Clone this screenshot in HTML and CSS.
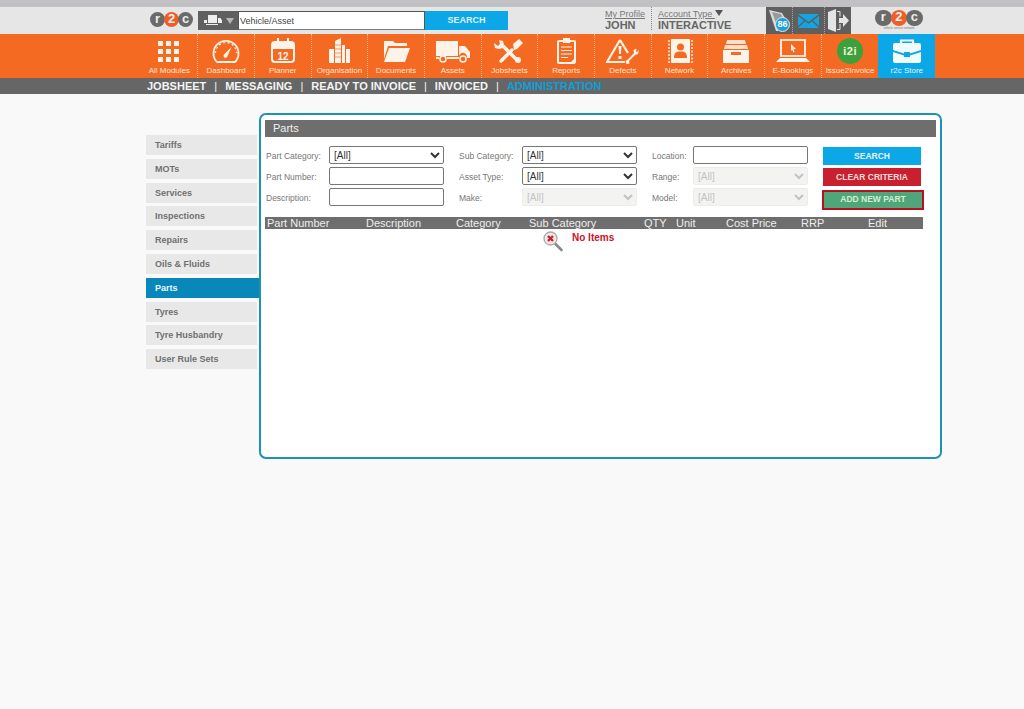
FILE: index.html
```html
<!DOCTYPE html>
<html>
<head>
	<meta charset="utf-8"/>
	<title>Parts</title>
	<link rel="stylesheet" href="styles.css">
</head>
<body>
	<div id="strip"></div>
	<div id="header">
		<div class="logo logo-left"><span>r</span><span class="two">2</span><span>c</span></div>
		<div id="asset-type">
			<svg width="19" height="11" viewBox="0 0 19 11"><path fill="#eee" d="M5 0h9v8H5zM15 3h2.500L19 5.500V8h-4zM1 5h3v3H1zM3 9h12v1H3z"/></svg>
			<i class="down"></i>
		</div>
		<input type="text" id="top-search" value="Vehicle/Asset"/>
		<a id="top-btn" href="javascript:void(0)">SEARCH</a>
		<div class="who">
			<a href="javascript:void(0)">My Profile</a>
			<b>JOHN</b>
		</div>
		<div class="who who-account">
			<a href="javascript:void(0)">Account Type <i class="down dark"></i></a>
			<b>INTERACTIVE</b>
		</div>
		<div id="tools">
			<div class="tool first">
				<svg width="22" height="24" viewBox="0 0 22 24"><path fill="#d8dcdc" d="M1 1l13 3 4 7-8 11h-2z"/><path fill="#9a9a9a" d="M4 3l9 2 3 6-7 6z"/></svg>
				<span id="badge">86</span>
			</div>
			<div class="tool mid">
				<svg width="21" height="14" viewBox="0 0 21 14"><path fill="#12a5e2" d="M0 0h21L10.500 8zM0 2l6 4.500L0 12zM21 2l-6 4.500 6 5.500zM7 7.300l3.500 2.500L14 7.300 21 14H0z"/></svg>
			</div>
			<div class="tool">
				<svg width="21" height="23" viewBox="0 0 21 23"><path fill="#e4e4e4" d="M0 3l8-3v23l-8-3z"/><path fill="none" stroke="#e4e4e4" d="M9 2.500h3v5M12 15v5.500H9"/><path fill="#e4e4e4" d="M11 9h4V5l6 6.500-6 6.500v-4h-4z"/></svg>
			</div>
		</div>
		<div class="logo logo-right">
			<div class="logo-row"><span>r</span><span class="two">2</span><span>c</span></div>
			<small>vehicle service network</small>
		</div>
	</div>
	<ul id="modules">
		<li><a href="javascript:void(0)">
			<svg width="34" height="26" viewBox="0 0 34 26"><path fill="#fdf3e8" d="M6 3h5v5H6zM14 3h5v5h-5zM22 3h5v5h-5zM6 11h5v5H6zM14 11h5v5h-5zM22 11h5v5h-5zM6 19h5v5H6zM14 19h5v5h-5zM22 19h5v5h-5z"/></svg>
			All Modules</a></li>
		<li><a href="javascript:void(0)">
			<svg width="34" height="26" viewBox="0 0 34 26"><g fill="none" stroke="#fdf3e8"><path stroke-width="1.800" d="M8 24a12.500 12.500 0 1 1 18 0z"/><path stroke-width="1.200" d="M6.500 15a10.500 10.500 0 0 1 21 0" stroke-dasharray="2 2.500"/></g><path fill="#fdf3e8" d="M15.500 16l7-7-4 9a2 2 0 1 1-3-2z"/></svg>
			Dashboard</a></li>
		<li><a href="javascript:void(0)">
			<svg width="34" height="26" viewBox="0 0 34 26"><rect x="6" y="4" width="22" height="20" rx="3" fill="none" stroke="#fdf3e8" stroke-width="2"/><path fill="#fdf3e8" d="M6 5h22v6H6z"/><path stroke="#fdf3e8" stroke-width="2" d="M12 0v6M22 0v6"/><text x="17" y="22" text-anchor="middle" class="svg-num">12</text></svg>
			Planner</a></li>
		<li><a href="javascript:void(0)">
			<svg width="34" height="26" viewBox="0 0 34 26"><path fill="#fdf3e8" d="M7 11h5v14H7zM13 3l6-3v25h-6zM20 7h3v18h-3zM24 11h4v14h-4z"/><path stroke="#f56a23" d="M13 7h6M13 11h6M13 15h6M13 19h6" stroke-width=".7"/></svg>
			Organisation</a></li>
		<li><a href="javascript:void(0)">
			<svg width="34" height="26" viewBox="0 0 34 26"><path fill="#fdf3e8" d="M5 3h9l2 2h12v3H9L5 21z"/><path fill="#fdf3e8" d="M10 10h21l-5 14H5z"/></svg>
			Documents</a></li>
		<li><a href="javascript:void(0)">
			<svg width="36" height="26" viewBox="0 0 36 26"><path fill="#fdf3e8" d="M1 3h22v15H1zM24 8h6l5 6v6h-3a4 4 0 0 0-8-2zM1 19h3v2H1zM12 19h12v2H12z"/><circle cx="8" cy="21" r="3" fill="none" stroke="#fdf3e8" stroke-width="1.500"/><circle cx="28" cy="21" r="3" fill="none" stroke="#fdf3e8" stroke-width="1.500"/></svg>
			Assets</a></li>
		<li><a href="javascript:void(0)">
			<svg width="34" height="26" viewBox="0 0 34 26"><path stroke="#fdf3e8" stroke-width="3.500" stroke-linecap="round" d="M9 23L20 12"/><path fill="#fdf3e8" d="M21 6l6-5 4 4-6 6-3 1z"/><path stroke="#fdf3e8" stroke-width="3.500" d="M11 8l14 14"/><path fill="#fdf3e8" d="M7 2l4 1 1 4-1 3-4 1-4-1-1-5 4 3 2-2z"/><circle cx="26" cy="22" r="3" fill="#fdf3e8"/></svg>
			Jobsheets</a></li>
		<li><a href="javascript:void(0)">
			<svg width="34" height="26" viewBox="0 0 34 26"><rect x="9" y="3" width="17" height="22" rx="1" fill="none" stroke="#fdf3e8" stroke-width="2"/><path fill="#fdf3e8" d="M14 0h7v5h-7zM21 25l5-5v5z"/><path stroke="#fdf3e8" stroke-width="1.200" d="M12 9h11M12 12.500h11M12 16h11M12 19.500h7"/></svg>
			Reports</a></li>
		<li><a href="javascript:void(0)">
			<svg width="36" height="26" viewBox="0 0 36 26"><path fill="none" stroke="#fdf3e8" stroke-width="2.200" stroke-linejoin="round" d="M15 2L2 24h18M15 2l8 13"/><path fill="#fdf3e8" d="M13.500 8h3l-.6 8h-1.800zM13.500 18h3v3h-3zM34 12l-1 4-3 1-6 6 .5 2.500-3 .5-1-3 2.500-1.500 6-6.500-.5-3 3-1.500-.5 3 1 .5z"/></svg>
			Defects</a></li>
		<li><a href="javascript:void(0)">
			<svg width="34" height="26" viewBox="0 0 34 26"><rect x="8" y="1" width="19" height="24" rx="1" fill="#fdf3e8"/><circle cx="17.500" cy="9" r="3.500" fill="#f56a23"/><path fill="#f56a23" d="M11 20c0-6 3-6.500 6.500-6.500S24 14 24 20z"/><path stroke="#fdf3e8" stroke-width="1.500" stroke-dasharray="2 1.500" d="M6 2v23M29 2v23"/></svg>
			Network</a></li>
		<li><a href="javascript:void(0)">
			<svg width="34" height="26" viewBox="0 0 34 26"><path fill="#fdf3e8" d="M8 2h18l1 4H7zM6 7h22l1 4H5z" opacity=".85"/><path fill="#fdf3e8" d="M4 12h26v13H4z"/><path fill="#f56a23" d="M12 14h10v3H12z"/></svg>
			Archives</a></li>
		<li><a href="javascript:void(0)">
			<svg width="36" height="26" viewBox="0 0 36 26"><rect x="6" y="2" width="24" height="16" fill="none" stroke="#fdf3e8" stroke-width="1.800"/><path fill="#fdf3e8" d="M16 6l5 5-2.500.3 1 2.700-1 .4-1.200-2.600L16 13zM5 20h26l4 4H1z"/></svg>
			E-Bookings</a></li>
		<li class="i2i"><a href="javascript:void(0)">
			<span id="i2i-mark">i2i</span>
			Issue2Invoice</a></li>
		<li class="store"><a href="javascript:void(0)">
			<svg width="34" height="26" viewBox="0 0 34 26"><path fill="none" stroke="#f2fbfb" stroke-width="2.200" d="M11 6V2.500h12V6"/><path fill="#f2fbfb" d="M5 5h24a2 2 0 0 1 2 2v5l-11 3.500v-1.500h-6v1.500L3 12V7a2 2 0 0 1 2-2zM3 14l11 3.500V19h6v-1.500L31 14v9a2 2 0 0 1-2 2H5a2 2 0 0 1-2-2z"/></svg>
			r2c Store</a></li>
	</ul>
	<div id="subnav">
		<a href="javascript:void(0)">JOBSHEET</a><i>|</i>
		<a href="javascript:void(0)">MESSAGING</a><i>|</i>
		<a href="javascript:void(0)">READY TO INVOICE</a><i>|</i>
		<a href="javascript:void(0)">INVOICED</a><i>|</i>
		<a class="on" href="javascript:void(0)">ADMINISTRATION</a>
	</div>
	<div id="content">
		<ul id="side">
			<li>Tariffs</li>
			<li>MOTs</li>
			<li>Services</li>
			<li>Inspections</li>
			<li>Repairs</li>
			<li>Oils &amp; Fluids</li>
			<li class="on">Parts</li>
			<li>Tyres</li>
			<li>Tyre Husbandry</li>
			<li>User Rule Sets</li>
		</ul>
		<div id="panel">
			<div id="title">Parts</div>
			<div id="filters">
				<div id="fields">
					<label>Part Category:</label>
					<select><option>[All]</option></select>
					<label>Sub Category:</label>
					<select><option>[All]</option></select>
					<label>Location:</label>
					<input type="text"/>
					<label>Part Number:</label>
					<input type="text"/>
					<label>Asset Type:</label>
					<select><option>[All]</option></select>
					<label>Range:</label>
					<select disabled><option>[All]</option></select>
					<label>Description:</label>
					<input type="text"/>
					<label>Make:</label>
					<select disabled><option>[All]</option></select>
					<label>Model:</label>
					<select disabled><option>[All]</option></select>
				</div>
				<div id="actions">
					<a class="btn blue" href="javascript:void(0)">SEARCH</a>
					<a class="btn red" href="javascript:void(0)">CLEAR CRITERIA</a>
					<a class="btn green" href="javascript:void(0)">ADD NEW PART</a>
				</div>
			</div>
			<div id="thead">
				<span>Part Number</span>
				<span>Description</span>
				<span>Category</span>
				<span>Sub Category</span>
				<span>QTY</span>
				<span>Unit</span>
				<span>Cost Price</span>
				<span>RRP</span>
				<span>Edit</span>
			</div>
			<div id="empty">
				<svg width="20" height="21" viewBox="0 0 20 21"><path stroke="#8a8a8a" stroke-width="2.600" stroke-linecap="round" d="M12.500 13l6 6"/><circle cx="7.500" cy="7.500" r="6.500" fill="#f3e9e9" stroke="#a9a9a9" stroke-width="1.300"/><path stroke="#c9202f" stroke-width="2.400" d="M5 5l5 5M10 5l-5 5"/></svg>
				<b>No Items</b>
			</div>
		</div>
	</div>
</body>
</html>
```

FILE: styles.css
```css
*{
	margin:0;
	padding:0;
	box-sizing:border-box;
}
html,body{
	height:100%;
}
body{
	background-color:#f9f9f9;
	font-family:"Liberation Sans",Arial,sans-serif;
	overflow:hidden;
}
a{
	text-decoration:none;
	color:inherit;
}
i{
	font-style:normal;
}
ul{
	list-style:none;
}
#strip{
	height:7px;
	background-color:#c1c1c3;
}
#header{
	height:27px;
	background-color:#e6e6e6;
	display:flex;
	align-items:flex-start;
	padding-left:150px;
}
.logo-row,.logo-left{
	display:flex;
}
.logo span{
	width:15px;
	height:15px;
	margin-right:-1px;
	border-radius:50%;
	background-color:#6a6a6a;
	color:#eee;
	font-size:13px;
	font-weight:bold;
	line-height:14px;
	text-align:center;
}
.logo span.two{
	background-color:#ee5f26;
}
.logo-left{
	width:48px;
	padding-top:5px;
}
.logo-right{
	width:48px;
	margin-left:24px;
	padding-top:3px;
}
.logo-right span{
	width:16.500px;
	height:16px;
}
.logo small{
	display:block;
	font-size:3px;
	line-height:4px;
	color:#777;
	text-align:center;
	white-space:nowrap;
}
#asset-type{
	width:40px;
	height:19px;
	margin-top:4px;
	background-color:#606060;
	display:flex;
	align-items:center;
	padding-left:5px;
	gap:4px;
}
.down{
	display:inline-block;
	width:0;
	height:0;
	border-left:4px solid transparent;
	border-right:4px solid transparent;
	border-top:6px solid #b5b5b5;
}
.down.dark{
	border-top-color:#555;
	vertical-align:1px;
}
#top-search{
	width:187px;
	height:19px;
	margin-top:4px;
	border:1px solid #555;
	border-bottom-color:#777;
	background-color:#fff;
	padding-left:1px;
	font:9px "Liberation Sans",Arial,sans-serif;
	color:#444;
}
#top-btn{
	width:83px;
	height:19px;
	margin-top:4px;
	background-color:#0ba7e6;
	color:#dff3fb;
	font-size:9px;
	font-weight:bold;
	line-height:19px;
	text-align:center;
}
.who{
	margin-left:97px;
	width:47px;
	height:23px;
	padding-top:3px;
	font-size:9px;
	line-height:9px;
	color:#777;
	border-right:1px dotted #888;
}
.who a{
	display:block;
	text-decoration:underline;
	white-space:nowrap;
}
.who b{
	display:block;
	font-size:11px;
	line-height:11px;
	margin-top:1px;
	color:#666;
	white-space:nowrap;
}
.who-account{
	margin-left:0;
	padding-left:6px;
	width:114px;
	border-right:0;
}
#tools{
	width:85px;
	height:27px;
	background-color:#5f5f5f;
	display:flex;
}
.tool{
	width:26px;
	height:27px;
	position:relative;
	display:flex;
	align-items:center;
	justify-content:center;
}
.tool.first{
	justify-content:flex-start;
	padding-left:2px;
}
.tool.mid{
	width:33px;
	border-left:1px dotted #a5a5a5;
	border-right:1px dotted #a5a5a5;
}
#badge{
	position:absolute;
	left:9px;
	top:10px;
	width:15px;
	height:15px;
	border-radius:50%;
	border:1.500px solid #e6e6e6;
	background-color:#1da1dc;
	color:#fff;
	font-size:9px;
	font-weight:bold;
	line-height:12px;
	text-align:center;
}
#modules{
	height:44px;
	background-color:#f56a23;
	display:flex;
	padding-left:141.500px;
}
#modules li{
	width:56.700px;
	height:44px;
	border-right:1px dotted #f9b48d;
}
#modules li.i2i{
	border-right:0;
}
#modules li.store{
	background-color:#0ba7e6;
	border-right:0;
}
#modules li a{
	display:flex;
	flex-direction:column;
	align-items:center;
	gap:2px;
	padding-top:4px;
	height:44px;
	font-size:8px;
	line-height:9px;
	color:#fbe6d8;
	white-space:nowrap;
}
#modules li.store a{
	color:#e5f6fc;
}
#modules li svg{
	flex:none;
}
.svg-num{
	font:bold 10px "Liberation Sans",Arial,sans-serif;
	fill:#fdf3e8;
}
#i2i-mark{
	width:26px;
	height:26px;
	border-radius:50%;
	background-color:#3ea03c;
	color:#f2f7dd;
	font-size:11px;
	font-weight:bold;
	letter-spacing:.5px;
	line-height:26px;
	text-align:center;
}
#subnav{
	height:16px;
	background-color:#666;
	padding-left:147px;
	display:flex;
	font-size:11px;
	font-weight:bold;
	line-height:16px;
	color:#f4f4f4;
}
#subnav i{
	font-weight:normal;
	margin:0 8px;
}
#subnav a.on{
	color:#0f9fd8;
}
#content{
	display:flex;
	padding:19px 0 0 146px;
}
#side{
	width:113px;
	padding-top:22px;
}
#side li{
	width:111px;
	height:20px;
	margin-bottom:3.800px;
	background-color:#e8e8e8;
	color:#707070;
	font-size:9px;
	font-weight:bold;
	line-height:20px;
	padding-left:9px;
}
#side li.on{
	width:113px;
	background-color:#0887bb;
	color:#f3f3f3;
}
#panel{
	width:683px;
	height:346px;
	background-color:#fff;
	border:2px solid #1c93b4;
	border-radius:7px;
	padding:5px 4px 0;
}
#title{
	height:17px;
	background-color:#6e6e6e;
	color:#f0f0f0;
	font-size:11px;
	line-height:17px;
	padding-left:8px;
}
#filters{
	display:flex;
	padding-top:9px;
}
#fields{
	width:543px;
	display:grid;
	grid-template-columns:63px 130px 63px 130px 41px 115px;
	grid-auto-rows:18px;
	row-gap:3px;
	padding-left:1px;
}
#fields label{
	font-size:8.500px;
	line-height:20px;
	color:#777;
	white-space:nowrap;
}
#fields select,#fields input{
	height:18px;
	width:115px;
	border:1px solid #767676;
	border-radius:2px;
	background-color:#fff;
	font:10px "Liberation Sans",Arial,sans-serif;
	color:#333;
}
#fields select:disabled{
	background-color:#efefed;
	border-color:#e4e4e2;
	color:#aaa;
}
#actions{
	width:98px;
	margin-left:15px;
	display:flex;
	flex-direction:column;
}
.btn{
	display:block;
	height:18px;
	margin-top:1px;
	margin-bottom:2px;
	color:#f1f1f1;
	font-size:8.500px;
	font-weight:bold;
	line-height:18px;
	text-align:center;
}
.btn.blue{
	background-color:#0ba7e6;
}
.btn.red{
	background-color:#c9202f;
	color:#f3dcdc;
}
.btn.green{
	height:20px;
	width:102px;
	margin:2px 0 0 -1px;
	background-color:#4fa67b;
	border:2px solid #b5121f;
	color:#d6eed0;
	line-height:15px;
}
#thead{
	width:658px;
	height:12px;
	margin-top:7px;
	background-color:#6e6e6e;
	color:#eee;
	font-size:11px;
	line-height:13px;
	display:grid;
	grid-template-columns:99px 90px 73px 115px 32px 50px 75px 67px 1fr;
	padding-left:2px;
	white-space:nowrap;
}
#empty{
	display:flex;
	align-items:flex-start;
	margin:2px 0 0 278px;
}
#empty b{
	margin-left:9px;
	padding-top:1px;
	font-size:10px;
	color:#c8142c;
}
```
